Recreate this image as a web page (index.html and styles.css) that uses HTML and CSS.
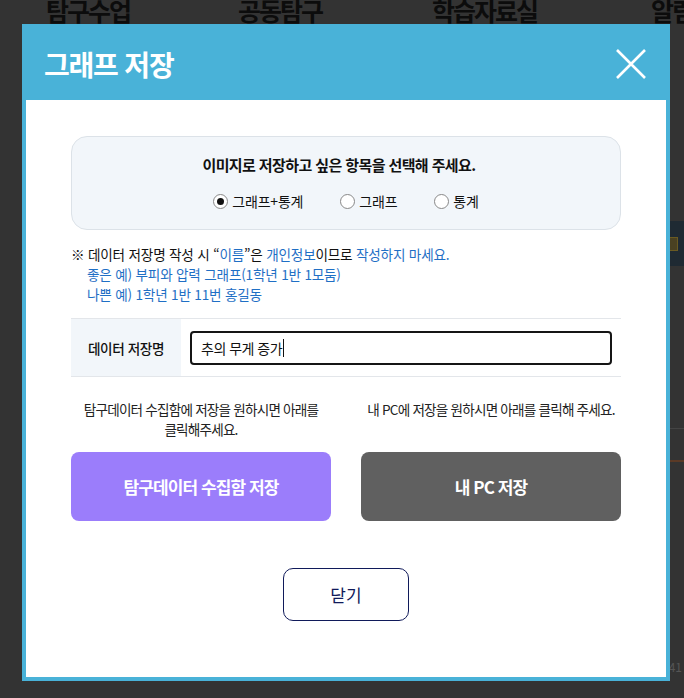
FILE: index.html
```html
<!DOCTYPE html>
<html lang="ko">
<head>
    <meta charset="UTF-8">
    <meta name="viewport" content="width=device-width, initial-scale=1.0">
    <title>그래프 저장</title>
    <link rel="stylesheet" href="styles.css">
</head>
<body>

    <!-- page behind the dim -->
    <nav class="gnb">
        <span>탐구수업</span>
        <span>공동탐구</span>
        <span>학습자료실</span>
        <span>알림마당</span>
    </nav>
    <div class="bg-band"><span class="bg-mark"></span></div>
    <div class="bg-line"></div>
    <div class="bg-line brown"></div>
    <div class="bg-page">41</div>

    <div class="modal">
        <div class="modal-head">
            <h2>그래프 저장</h2>
            <button class="btn-x" aria-label="닫기">
                <svg width="30" height="30" viewBox="0 0 30 30">
                    <path d="M1 1 L29 29 M29 1 L1 29" stroke="#fff" stroke-width="2.6" fill="none"/>
                </svg>
            </button>
        </div>

        <div class="modal-body">
            <div class="choice-box">
                <p class="choice-title">이미지로 저장하고 싶은 항목을 선택해 주세요.</p>
                <div class="radios">
                    <label class="radio"><span class="dot on"></span>그래프+통계</label>
                    <label class="radio"><span class="dot"></span>그래프</label>
                    <label class="radio"><span class="dot"></span>통계</label>
                </div>
            </div>

            <div class="notice">
                <p>※ 데이터 저장명 작성 시 “<em>이름</em>”은 <em>개인정보</em>이므로 <em>작성하지 마세요.</em></p>
                <p class="ex">좋은 예) 부피와 압력 그래프(1학년 1반 1모둠)</p>
                <p class="ex">나쁜 예) 1학년 1반 11번 홍길동</p>
            </div>

            <div class="name-row">
                <div class="name-label">데이터 저장명</div>
                <div class="name-field">
                    <div class="name-input">추의 무게 증가<span class="caret"></span></div>
                </div>
            </div>

            <div class="save-cols">
                <div class="save-col">
                    <p class="save-desc">탐구데이터 수집함에 저장을 원하시면 아래를<br>클릭해주세요.</p>
                    <button class="btn-save purple">탐구데이터 수집함 저장</button>
                </div>
                <div class="save-col">
                    <p class="save-desc">내 PC에 저장을 원하시면 아래를 클릭해 주세요.</p>
                    <button class="btn-save gray">내 PC 저장</button>
                </div>
            </div>

            <div class="close-wrap">
                <button class="btn-close">닫기</button>
            </div>
        </div>
    </div>

</body>
</html>
```

FILE: styles.css
```css
* { box-sizing: border-box; }

body {
    margin: 0;
    background: #333;
    font-family: "Noto Sans CJK KR", sans-serif;
    color: #111;
    height: 698px;
    overflow: hidden;
}

/* background page */
.gnb {
    display: grid;
    grid-template-columns: 192px 194px 219px auto;
    padding-left: 46px;
    height: 24px;
    overflow: hidden;
    white-space: nowrap;
}
.gnb span {
    font-size: 25px;
    font-weight: 700;
    letter-spacing: -2px;
    line-height: 20px;
    color: #0c0c0c;
}

.bg-band {
    margin: 197px 0 0 auto;
    width: 200px;
    height: 45px;
    background: #1f2a33;
    display: flex;
    justify-content: flex-end;
    align-items: center;
    padding-right: 6px;
}
.bg-mark {
    width: 10px;
    height: 14px;
    background: #4a4122;
    border: 1px solid #6a5a22;
}
.bg-line {
    margin: 162px 0 0 auto;
    width: 200px;
    height: 1px;
    background: #444;
}
.bg-line.brown {
    margin-top: 31px;
    height: 2px;
    background: #5b3a26;
}
.bg-page {
    margin-top: 196px;
    text-align: right;
    font-size: 12px;
    color: #555;
    padding-right: 2px;
}

/* modal */
.modal {
    position: absolute;
    left: 22px;
    top: 24px;
    width: 648px;
    height: 657px;
    border: 4px solid #49b2d8;
    background: #fff;
    display: flex;
    flex-direction: column;
}
.modal-head {
    height: 72px;
    background: #49b2d8;
    display: flex;
    align-items: center;
    justify-content: space-between;
    padding: 0 20px 0 18px;
}
.modal-head h2 {
    margin: 0;
    color: #fff;
    font-size: 28px;
    font-weight: 700;
    letter-spacing: -1.2px;
}
.btn-x {
    border: none;
    background: none;
    padding: 0;
    width: 30px;
    height: 30px;
    display: flex;
}

.modal-body {
    flex: 1;
    padding: 36px 45px 0 45px;
}

.choice-box {
    height: 94px;
    background: #f2f6fa;
    border: 1px solid #dce2e8;
    border-radius: 16px;
    padding-top: 17px;
    text-align: center;
}
.choice-title {
    margin: 0;
    font-size: 15px;
    font-weight: 700;
    line-height: 22px;
    letter-spacing: -0.6px;
    padding-right: 14px;
}
.radios {
    margin-top: 15px;
    display: flex;
    justify-content: center;
    gap: 37px;
}
.radio {
    display: flex;
    align-items: center;
    gap: 4px;
    font-size: 14px;
    line-height: 20px;
    letter-spacing: -0.2px;
}
.dot {
    width: 15px;
    height: 15px;
    border: 1px solid #888;
    border-radius: 50%;
    background: #fff;
    display: flex;
    align-items: center;
    justify-content: center;
}
.dot.on::after {
    content: "";
    width: 7px;
    height: 7px;
    border-radius: 50%;
    background: #111;
}

.notice {
    margin-top: 14px;
    font-size: 13.6px;
    line-height: 20px;
    letter-spacing: -0.2px;
}
.notice p { margin: 0; }
.notice em {
    font-style: normal;
    color: #1f6fc5;
}
.notice .ex {
    color: #1f6fc5;
    padding-left: 16px;
}

.name-row {
    margin-top: 14px;
    display: flex;
    border-top: 1px solid #e3e6ea;
    border-bottom: 1px solid #e3e6ea;
    height: 59px;
}
.name-label {
    width: 110px;
    background: #f2f6fa;
    padding-left: 17px;
    display: flex;
    align-items: center;
    font-size: 13.6px;
    font-weight: 500;
    letter-spacing: -0.4px;
}
.name-field {
    flex: 1;
    padding: 0 9px;
    display: flex;
    align-items: center;
}
.name-input {
    width: 100%;
    height: 34px;
    border: 2px solid #151515;
    border-radius: 4px;
    padding-left: 9px;
    font-size: 14px;
    letter-spacing: -0.5px;
    display: flex;
    align-items: center;
}
.caret {
    width: 1px;
    height: 18px;
    background: #111;
    margin-left: 1px;
}

.save-cols {
    margin-top: 22px;
    display: grid;
    grid-template-columns: 1fr 1fr;
    gap: 30px;
}
.save-col {
    display: flex;
    flex-direction: column;
}
.save-desc {
    margin: 0;
    height: 53px;
    text-align: center;
    font-size: 13.6px;
    line-height: 20px;
    letter-spacing: -0.8px;
    color: #222;
}
.btn-save {
    height: 69px;
    border: none;
    border-radius: 8px;
    color: #fff;
    font-family: inherit;
    font-size: 17px;
    font-weight: 700;
    letter-spacing: -0.9px;
}
.btn-save.purple { background: #9b7dfb; }
.btn-save.gray { background: #606060; }

.close-wrap {
    margin-top: 47px;
    display: flex;
    justify-content: center;
}
.btn-close {
    width: 126px;
    height: 53px;
    background: #fff;
    border: 1px solid #101a5a;
    border-radius: 10px;
    color: #101a5a;
    font-family: inherit;
    font-size: 17px;
}
```
